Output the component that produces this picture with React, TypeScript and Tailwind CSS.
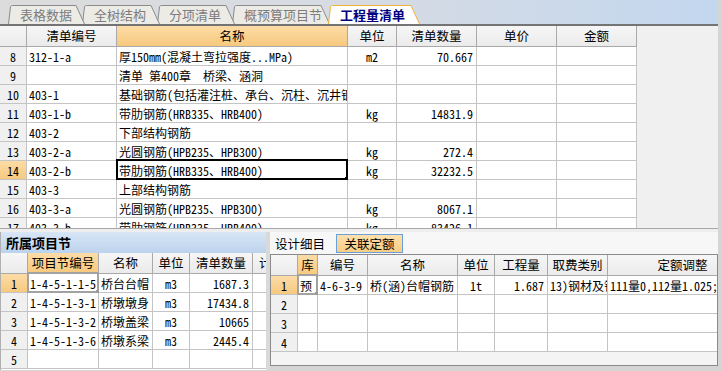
import React from "react";

const MONO = "font-['Noto_Sans_Mono_CJK_SC','Noto_Sans_CJK_SC','Liberation_Mono',monospace]";
const SANS = "font-['Noto_Sans_CJK_SC','Noto_Sans',sans-serif]";

type Align = "l" | "c" | "r";

const alignCls = (a: Align) =>
  a === "l" ? "justify-start pl-[2px]" : a === "c" ? "justify-center" : "justify-end pr-[3px]";

function Tab({ w, label, active, cls }: { w: number; label: string; active?: boolean; cls: string }) {
  const d = `M0.5 19 L2.5 1.8 Q3 0.5 4.5 0.5 L${w - 9} 0.5 L${w - 0.5} 19`;
  return (
    <div className={`relative h-[19px] shrink-0 ${cls}`}>
      <svg className="absolute inset-0" width={w} height={19} viewBox={`0 0 ${w} 19`}>
        <path d={d} fill={active ? "#ffffff" : "#ecebe6"} stroke={active ? "#efb13a" : "#8b8b8b"} strokeWidth={1} />
      </svg>
      <div
        className={`relative flex h-full items-center pl-[12px] ${SANS} ${
          active ? "text-[13px] font-bold text-[#000080]" : "text-[13px] text-[#7c7c7c]"
        }`}
      >
        {label}
      </div>
    </div>
  );
}

function SelBox({ color, thick }: { color: string; thick?: boolean }) {
  return (
    <>
      <div
        className={`pointer-events-none absolute -left-[1px] -top-[2px] -right-[1px] -bottom-[1px] border-2 ${
          thick ? "border-black" : "border-[#a2a2a2]"
        }`}
      />
      <div className={`absolute -right-[3px] -bottom-[3px] h-[5px] w-[5px] ${color}`} />
    </>
  );
}

const ORANGE = "bg-gradient-to-b from-[#fcdca6] to-[#f7c97e]";
const HEAD = "bg-gradient-to-b from-[#f6f6f6] to-[#ebebeb]";

/* ---------------- top grid ---------------- */
const topCols = ["w-[27px]", "w-[90px]", "w-[231px]", "w-[49px]", "w-[80px]", "w-[80px]", "w-[80px]"];
const topAlign: Align[] = ["c", "l", "l", "c", "r", "r", "r"];
const topHeaders = ["", "清单编号", "名称", "单位", "清单数量", "单价", "金额"];
const topRows: string[][] = [
  ["8", "312-1-a", "厚150mm(混凝土弯拉强度...MPa)", "m2", "70.667", "", ""],
  ["9", "", "清单 第400章  桥梁、涵洞", "", "", "", ""],
  ["10", "403-1", "基础钢筋(包括灌注桩、承台、沉柱、沉井钢筋等)", "", "", "", ""],
  ["11", "403-1-b", "带肋钢筋(HRB335、HRB400)", "kg", "14831.9", "", ""],
  ["12", "403-2", "下部结构钢筋", "", "", "", ""],
  ["13", "403-2-a", "光圆钢筋(HPB235、HPB300)", "kg", "272.4", "", ""],
  ["14", "403-2-b", "带肋钢筋(HRB335、HRB400)", "kg", "32232.5", "", ""],
  ["15", "403-3", "上部结构钢筋", "", "", "", ""],
  ["16", "403-3-a", "光圆钢筋(HPB235、HPB300)", "kg", "8067.1", "", ""],
  ["17", "403-3-b", "带肋钢筋(HRB335、HRB400)", "kg", "83426.1", "", ""],
];

/* ---------------- bottom left grid ---------------- */
const blCols = ["w-[27px]", "w-[71px]", "w-[54px]", "w-[37px]", "w-[63px]", "w-[40px]"];
const blAlign: Align[] = ["c", "l", "l", "c", "r", "l"];
const blHeaders = ["", "项目节编号", "名称", "单位", "清单数量", "计量单位"];
const blRows: string[][] = [
  ["1", "1-4-5-1-1-5", "桥台台帽", "m3", "1687.3", ""],
  ["2", "1-4-5-1-3-1", "桥墩墩身", "m3", "17434.8", ""],
  ["3", "1-4-5-1-3-2", "桥墩盖梁", "m3", "10665", ""],
  ["4", "1-4-5-1-3-6", "桥墩系梁", "m3", "2445.4", ""],
  ["5", "", "", "", "", ""],
];

/* ---------------- bottom right grid ---------------- */
const brCols = ["w-[27px]", "w-[20px]", "w-[50px]", "w-[90px]", "w-[37px]", "w-[53px]", "w-[60px]", "w-[150px]"];
const brAlign: Align[] = ["c", "l", "l", "l", "c", "r", "l", "l"];
const brHeaders = ["", "库", "编号", "名称", "单位", "工程量", "取费类别", "定额调整"];
const brRows: string[][] = [
  ["1", "预", "4-6-3-9", "桥(涵)台帽钢筋", "1t", "1.687", "13)钢材及钢结构", "111量0,112量1.025;"],
  ["2", "", "", "", "", "", "", ""],
  ["3", "", "", "", "", "", "", ""],
  ["4", "", "", "", "", "", "", ""],
];

function HeaderRow({
  cols,
  headers,
  hot,
  h,
  leftLast,
}: {
  cols: string[];
  headers: string[];
  hot: number;
  h: string;
  leftLast?: boolean;
}) {
  return (
    <div className={`flex ${h} shrink-0`}>
      {headers.map((t, i) => (
        <div
          key={i}
          className={`${cols[i]} ${i === hot ? ORANGE : HEAD} flex h-full shrink-0 items-center ${
            leftLast && i === headers.length - 1 ? "justify-start pl-[6px]" : "justify-center"
          } overflow-hidden whitespace-nowrap border-b border-r border-[#a9a9a9] ${SANS} text-[12.5px] leading-[18px] text-black`}
        >
          {t}
        </div>
      ))}
    </div>
  );
}

function BodyRow({
  cols,
  align,
  cells,
  hotRow,
  sel,
  selThick,
}: {
  cols: string[];
  align: Align[];
  cells: string[];
  hotRow?: boolean;
  sel?: number;
  selThick?: boolean;
}) {
  return (
    <div className="flex h-[19px] shrink-0">
      {cells.map((t, i) => (
        <div
          key={i}
          className={`${cols[i]} relative flex h-full shrink-0 items-center whitespace-pre border-b border-r ${
            sel === i ? "" : "overflow-hidden"
          } ${
            i === 0
              ? `${hotRow ? ORANGE : "bg-[#f0f0f0]"} border-[#c4c4c4]`
              : "bg-white border-[#c4c4c4]"
          } ${alignCls(align[i])} ${MONO} text-[12px] leading-[17px] text-black`}
        >
          <div className="min-w-0 overflow-hidden">{t}</div>
          {sel === i && <SelBox color={selThick ? "bg-black" : "bg-[#9a9a9a]"} thick={selThick} />}
        </div>
      ))}
    </div>
  );
}

export default function App() {
  return (
    <div className="h-[371px] w-[722px] overflow-hidden bg-[#d5d5d5]">
      <div className="flex h-full w-[718px] flex-col">
        {/* tab strip */}
        <div className="flex h-[24px] shrink-0 items-end bg-gradient-to-r from-[#dcdcdc] via-[#d6dbe3] to-[#c3d7ef]">
          <Tab w={77} label="表格数据" cls="ml-[8px] w-[77px] z-[5]" />
          <Tab w={78} label="全树结构" cls="-ml-[3px] w-[78px] z-[4]" />
          <Tab w={78} label="分项清单" cls="-ml-[3px] w-[78px] z-[3]" />
          <Tab w={98} label="概预算项目节" cls="-ml-[3px] w-[98px] z-[2]" />
          <Tab w={92} label="工程量清单" active cls="-ml-[2px] w-[92px] z-[6]" />
        </div>
        <div className="h-[2px] shrink-0 bg-[#747474]" />

        {/* top grid */}
        <div className="flex h-[203px] shrink-0 overflow-hidden border-b border-[#a8a8a8]">
          <div className="flex w-[637px] shrink-0 flex-col">
            <HeaderRow cols={topCols} headers={topHeaders} hot={2} h="h-[21px]" />
            {topRows.map((r, i) => (
              <BodyRow
                key={i}
                cols={topCols}
                align={topAlign}
                cells={r}
                hotRow={r[0] === "14"}
                sel={r[0] === "14" ? 2 : undefined}
                selThick
              />
            ))}
          </div>
          <div className="flex-1 bg-[#f0f0f0]" />
        </div>
        <div className="h-[3px] shrink-0 bg-[#eeeeee]" />

        {/* bottom */}
        <div className="flex h-[138px] shrink-0">
          {/* left panel */}
          <div className="flex w-[266px] shrink-0 flex-col overflow-hidden border-l border-[#b0b0b0] bg-white">
            <div
              className={`flex h-[21px] shrink-0 items-center bg-gradient-to-b from-[#d8e6f6] to-[#bcd3ed] pl-[5px] ${SANS} text-[13px] font-bold leading-[18px] text-black`}
            >
              所属项目节
            </div>
            <div className="flex shrink-0 flex-col">
              <HeaderRow cols={blCols} headers={blHeaders} hot={1} h="h-[21px]" leftLast />
              {blRows.map((r, i) => (
                <BodyRow
                  key={i}
                  cols={blCols}
                  align={blAlign}
                  cells={r}
                  hotRow={i === 0}
                  sel={i === 0 ? 1 : undefined}
                />
              ))}
            </div>
          </div>
          <div className="w-[4px] shrink-0 bg-[#d9d9d9]" />

          {/* right panel */}
          <div className="flex w-[448px] shrink-0 flex-col">
            <div className={`flex h-[22px] shrink-0 items-center bg-[#f7f7f7] ${SANS} text-[12.5px] leading-[17px] text-black`}>
              <span className="ml-[5px] w-[61px]">设计细目</span>
              <span className="flex h-[19px] w-[67px] items-center justify-center border border-[#6a9fd8] bg-gradient-to-b from-[#fde0ad] to-[#f9cd84]">
                关联定额
              </span>
            </div>
            <div className="flex h-[112px] shrink-0 flex-col overflow-hidden border border-[#8a8a8a] bg-[#f4f4f4]">
              <HeaderRow cols={brCols} headers={brHeaders} hot={1} h="h-[21px]" />
              {brRows.map((r, i) => (
                <BodyRow
                  key={i}
                  cols={brCols}
                  align={brAlign}
                  cells={r}
                  hotRow={i === 0}
                  sel={i === 0 ? 1 : undefined}
                />
              ))}
            </div>
          </div>
        </div>
      </div>
    </div>
  );
}
